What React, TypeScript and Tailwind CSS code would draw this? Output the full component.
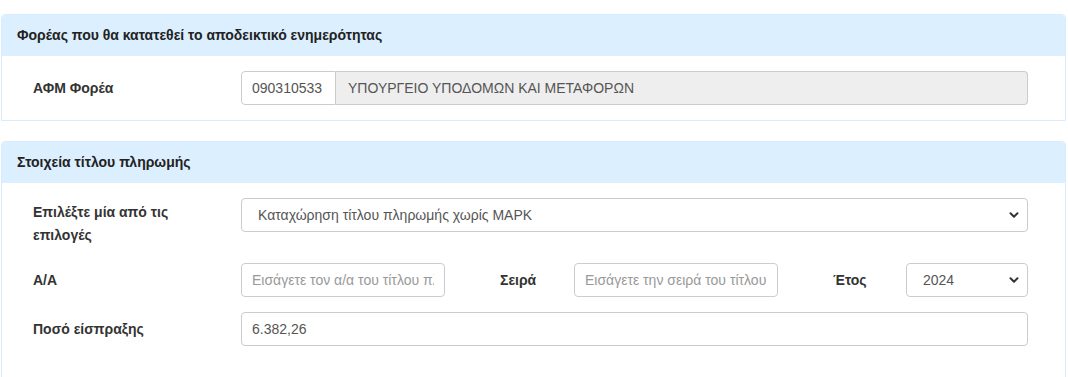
import React from 'react';

const font = { fontFamily: '"Liberation Sans", Arial, sans-serif' };

function Chevron() {
  return (
    <svg
      className="pointer-events-none absolute right-[9px] top-1/2 -translate-y-1/2 w-[10px] h-[10px]"
      viewBox="0 0 10 10"
      fill="none"
    >
      <path d="M1.5 3.2 L5 6.7 L8.5 3.2" stroke="#333" strokeWidth="2" strokeLinecap="round" strokeLinejoin="round" />
    </svg>
  );
}

function Select({ value, className }: { value: string; className: string }) {
  return (
    <div className={`relative ${className}`}>
      <div className="h-[34px] flex items-center bg-white border border-[#ccc] rounded-[4px] pl-[16px] pr-[30px] text-[14px] text-[#555] truncate">
        {value}
      </div>
      <Chevron />
    </div>
  );
}

function Input({ value, placeholder, className }: { value?: string; placeholder?: string; className: string }) {
  return (
    <input
      readOnly
      value={value ?? ''}
      placeholder={placeholder}
      className={`h-[34px] bg-white border border-[#ccc] rounded-[4px] px-[10px] text-[14px] text-[#555] placeholder:text-[#999] outline-none ${className}`}
      style={font}
    />
  );
}

function Panel({ title, children }: { title: string; children: React.ReactNode }) {
  return (
    <div className="w-[1065px] border border-[#d9ecfd] rounded-t-[4px] bg-white">
      <div className="h-[41px] bg-[#dcefff] flex items-center px-[15px] rounded-t-[3px] text-[14px] font-bold text-[#222]">
        {title}
      </div>
      {children}
    </div>
  );
}

export default function App() {
  return (
    <div className="h-[377px] overflow-hidden bg-white pt-[14px] pl-[1px]" style={font}>
      <Panel title="Φορέας που θα κατατεθεί το αποδεικτικό ενημερότητας">
        <div className="flex items-center pt-[15px] pb-[15px]">
          <div className="w-[239px] pl-[31px] text-[14px] font-bold text-[#333]">ΑΦΜ Φορέα</div>
          <div className="flex w-[787px]">
            <div className="h-[34px] w-[95px] flex items-center bg-white border border-[#ccc] rounded-l-[4px] pl-[10px] text-[14px] text-[#555]">
              090310533
            </div>
            <div className="h-[34px] flex-1 flex items-center bg-[#eee] border border-[#ccc] border-l-0 rounded-r-[4px] pl-[12px] text-[14px] text-[#555]">
              ΥΠΟΥΡΓΕΙΟ ΥΠΟΔΟΜΩΝ ΚΑΙ ΜΕΤΑΦΟΡΩΝ
            </div>
          </div>
        </div>
      </Panel>

      <div className="h-[20px]" />

      <Panel title="Στοιχεία τίτλου πληρωμής">
        <div className="pt-[15px] pb-[60px]">
          <div className="flex items-start">
            <div className="w-[239px] pl-[31px] pt-[3px] pr-[20px] text-[14px] font-bold text-[#333] leading-[23px]">
              Επιλέξτε μία από τις επιλογές
            </div>
            <Select value="Καταχώρηση τίτλου πληρωμής χωρίς ΜΑΡΚ" className="w-[787px]" />
          </div>

          <div className="flex items-center mt-[16px]">
            <div className="w-[239px] pl-[31px] text-[14px] font-bold text-[#333]">Α/Α</div>
            <Input placeholder="Εισάγετε τον α/α του τίτλου πληρωμής" className="w-[204px]" />
            <div className="w-[129px] pl-[55px] text-[14px] font-bold text-[#333]">Σειρά</div>
            <Input placeholder="Εισάγετε την σειρά του τίτλου πληρωμής" className="w-[204px]" />
            <div className="w-[128px] pl-[55px] text-[14px] font-bold text-[#333]">Έτος</div>
            <Select value="2024" className="w-[122px]" />
          </div>

          <div className="flex items-center mt-[15px]">
            <div className="w-[239px] pl-[31px] text-[14px] font-bold text-[#333]">Ποσό είσπραξης</div>
            <Input value="6.382,26" className="w-[787px]" />
          </div>
        </div>
      </Panel>
    </div>
  );
}
